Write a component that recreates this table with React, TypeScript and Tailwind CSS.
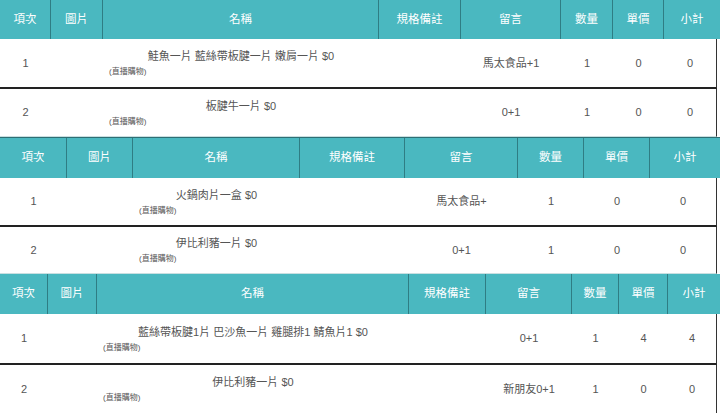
import React from "react";

type Row = {
  no: string;
  name: string;
  msg: string;
  qty: string;
  price: string;
  sub: string;
  h: string;
};

type Table = {
  cols: string;
  headH: string;
  top: string;
  rows: Row[];
};

const heads = ["項次", "圖片", "名稱", "規格備註", "留言", "數量", "單價", "小計"];

const tables: Table[] = [
  {
    cols: "grid-cols-[51px_52px_276px_82px_100px_52px_51px_1fr]",
    headH: "h-[39px]",
    top: "",
    rows: [
      { no: "1", name: "鮭魚一片 藍絲帶板腱一片 嫩肩一片 $0", msg: "馬太食品+1", qty: "1", price: "0", sub: "0", h: "h-[50px]" },
      { no: "2", name: "板腱牛一片 $0", msg: "0+1", qty: "1", price: "0", sub: "0", h: "h-[48px]" },
    ],
  },
  {
    cols: "grid-cols-[67px_66px_167px_105px_113px_66px_66px_1fr]",
    headH: "h-[40px]",
    top: "border-t border-[#2f6f74]",
    rows: [
      { no: "1", name: "火鍋肉片一盒 $0", msg: "馬太食品+", qty: "1", price: "0", sub: "0", h: "h-[49px]" },
      { no: "2", name: "伊比利豬一片 $0", msg: "0+1", qty: "1", price: "0", sub: "0", h: "h-[47px]" },
    ],
  },
  {
    cols: "grid-cols-[48px_49px_312px_77px_86px_47px_49px_1fr]",
    headH: "h-[40px]",
    top: "",
    rows: [
      { no: "1", name: "藍絲帶板腱1片 巴沙魚一片 雞腿排1 鯖魚片1 $0", msg: "0+1", qty: "1", price: "4", sub: "4", h: "h-[51px]" },
      { no: "2", name: "伊比利豬一片 $0", msg: "新朋友0+1", qty: "1", price: "0", sub: "0", h: "h-[48px]" },
    ],
  },
];

const font = { fontFamily: '"Liberation Sans", "Noto Sans CJK TC", sans-serif' };

function TableBlock({ t, last }: { t: Table; last: boolean }) {
  return (
    <div className={`w-full ${t.top}`}>
      <div className={`grid ${t.cols} ${t.headH} bg-[#4ab8c0] text-white text-[11.5px]`}>
        {heads.map((h, i) => (
          <div
            key={h}
            className={`flex items-center justify-center ${i < heads.length - 1 ? "border-r border-[#2f7d84]" : ""}`}
          >
            {h}
          </div>
        ))}
      </div>
      {t.rows.map((r, ri) => (
        <div
          key={ri}
          className={`grid ${t.cols} ${r.h} w-[717px] border-r border-[#333] bg-white text-[#555] text-[11px] ${
            ri === 0 ? "border-b-2 border-b-[#222]" : last ? "" : "border-b border-b-[#c9dfe1]"
          }`}
        >
          <div className="flex items-center justify-center">{r.no}</div>
          <div />
          <div className="flex flex-col justify-center">
            <div className="text-center leading-[14px]">{r.name}</div>
            <div className="mt-[4px] pl-[6px] text-[8px] leading-[10px] text-[#555]">(直播購物)</div>
          </div>
          <div />
          <div className="flex items-center justify-center">{r.msg}</div>
          <div className="flex items-center justify-center">{r.qty}</div>
          <div className="flex items-center justify-center">{r.price}</div>
          <div className="flex items-center justify-center">{r.sub}</div>
        </div>
      ))}
    </div>
  );
}

export default function App() {
  return (
    <div className="w-[720px] h-[417px] overflow-hidden bg-white" style={font}>
      {tables.map((t, i) => (
        <TableBlock key={i} t={t} last={i === tables.length - 1} />
      ))}
    </div>
  );
}
